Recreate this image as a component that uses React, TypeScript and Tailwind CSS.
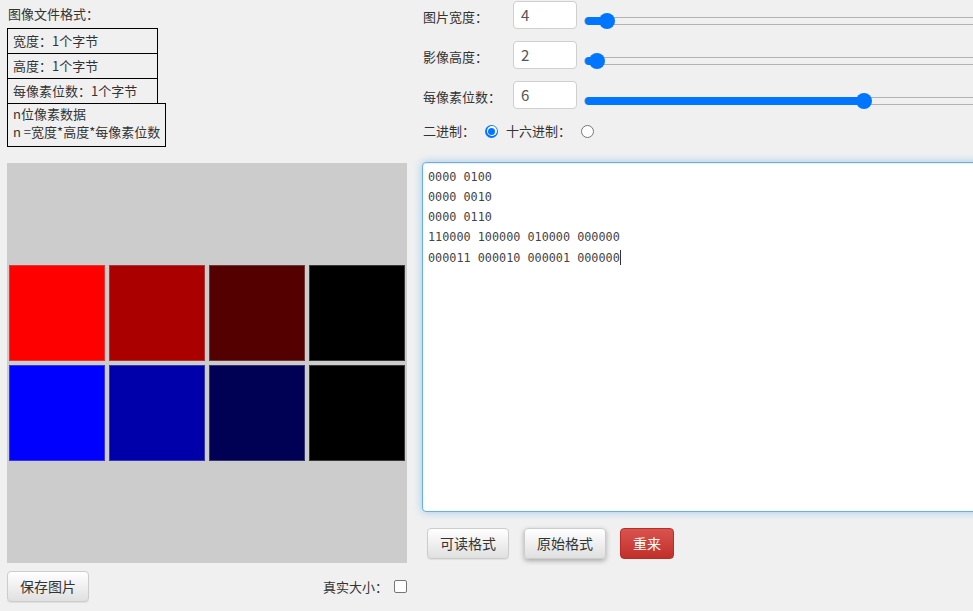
import React from "react";

const FONT = { fontFamily: '"Noto Sans CJK SC", "Noto Sans", sans-serif' };
const MONO = { fontFamily: '"DejaVu Sans Mono", "Liberation Mono", monospace' };

function Slider({ pos }: { pos: number }) {
  return (
    <div className="relative ml-[7px] mt-[13px] h-[16px] w-[520px] shrink-0">
      <div className="absolute left-0 right-0 top-[4px] h-[8px] rounded-full border border-[#b2b2b2]" />
      <div
        className="absolute left-[1px] top-[4px] h-[8px] rounded-l-full bg-[#0075ff]"
        style={{ width: pos }}
      />
      <div
        className="absolute top-0 h-[16px] w-[16px] rounded-full bg-[#0075ff]"
        style={{ left: pos - 8 }}
      />
    </div>
  );
}

function Row({ label, value, pos }: { label: string; value: string; pos: number }) {
  return (
    <div className="flex h-[40px] items-start">
      <div className="mt-[7px] w-[91px] pl-[1px] text-[13px] leading-[20px] text-[#333]">{label}</div>
      <div className="mt-[1px] flex h-[28px] w-[64px] shrink-0 items-center rounded-[4px] border border-[#cfcfcf] bg-white px-[7px] text-[15px] text-[#555]">
        {value}
      </div>
      <Slider pos={pos} />
    </div>
  );
}

const btnDefault =
  "h-[31px] rounded-[4px] border border-[#cccccc] bg-gradient-to-b from-white to-[#e0e0e0] px-3 text-[14px] text-[#333] shadow-[0_1px_1px_rgba(0,0,0,0.075)]";

export default function App() {
  const colors = [
    ["#ff0000", "#aa0000", "#550000", "#000000"],
    ["#0000ff", "#0000aa", "#000055", "#000000"],
  ];
  return (
    <div className="flex h-[611px] w-[973px] overflow-hidden bg-[#f0f0f0] text-[#333]" style={FONT}>
      {/* Left column */}
      <div className="ml-[7px] flex w-[400px] shrink-0 flex-col">
        <div className="mt-[4px] mb-[4px] pl-[1px] text-[13px] leading-[20px]">图像文件格式：</div>
        <div className="flex flex-col items-start text-[13px]">
          <div className="h-[26px] w-[151px] border border-black pl-[5px] leading-[24px]">宽度：1个字节</div>
          <div className="-mt-px h-[26px] w-[151px] border border-black pl-[5px] leading-[24px]">高度：1个字节</div>
          <div className="-mt-px h-[26px] w-[151px] border border-black pl-[5px] leading-[24px]">每像素位数：1个字节</div>
          <div className="-mt-px h-[44px] w-[159px] border border-black pl-[5px] pt-[1px] leading-[18px]">
            <div>n位像素数据</div>
            <div>n =宽度*高度*每像素位数</div>
          </div>
        </div>
        <div className="mt-[16px] flex h-[400px] w-[400px] flex-col justify-center bg-[#cccccc]">
          {colors.map((row, i) => (
            <div key={i} className="flex">
              {row.map((c, j) => (
                <div key={j} className="h-[100px] w-[100px] p-[2px]">
                  <div className="h-full w-full border border-[rgba(160,160,160,0.35)]" style={{ background: c }} />
                </div>
              ))}
            </div>
          ))}
        </div>
        <div className="mt-[8px] flex items-center justify-between">
          <button className="h-[31px] w-[82px] rounded-[4px] border border-[#cccccc] bg-gradient-to-b from-white to-[#e0e0e0] text-[14px] text-[#333] shadow-[0_1px_1px_rgba(0,0,0,0.075)]">
            保存图片
          </button>
          <div className="flex items-center text-[13px]">
            <span>真实大小：</span>
            <span className="ml-[6px] h-[13px] w-[13px] rounded-[2px] border border-[#767676] bg-white" />
          </div>
        </div>
      </div>

      {/* Right column */}
      <div className="ml-[15px] flex flex-col">
        <Row label="图片宽度：" value="4" pos={23} />
        <Row label="影像高度：" value="2" pos={13} />
        <Row label="每像素位数：" value="6" pos={280} />
        <div className="flex h-[22px] items-center text-[13px] leading-[20px]">
          <span className="w-[63px] pl-[1px]">二进制：</span>
          <span className="flex h-[13px] w-[13px] items-center justify-center rounded-full bg-[#0075ff]">
            <span className="flex h-[10px] w-[10px] items-center justify-center rounded-full bg-white">
              <span className="h-[7px] w-[7px] rounded-full bg-[#0075ff]" />
            </span>
          </span>
          <span className="ml-[8px] w-[75px]">十六进制：</span>
          <span className="h-[13px] w-[13px] rounded-full border border-[#767676] bg-white" />
        </div>
        <div
          className="mt-[20px] h-[350px] w-[570px] whitespace-pre rounded-[4px] border border-[#66afe9] bg-white px-[5px] pt-[4px] text-[11.8px] leading-[20px] text-[#444] shadow-[inset_0_1px_1px_rgba(0,0,0,0.075),0_0_8px_rgba(102,175,233,0.6)]"
          style={MONO}
        >
          {"0000 0100\n0000 0010\n0000 0110\n110000 100000 010000 000000\n000011 000010 000001 000000"}
          <span className="inline-block h-[15px] w-px translate-y-[3px] bg-[#333]" />
        </div>
        <div className="mt-[16px] ml-[5px] flex items-center">
          <button className={btnDefault + " w-[82px]"}>可读格式</button>
          <button className="ml-[15px] h-[31px] w-[82px] rounded-[4px] border border-[#cccccc] bg-gradient-to-b from-white to-[#e0e0e0] text-[14px] text-[#333] shadow-[0_2px_5px_rgba(0,0,0,0.3)]">
            原始格式
          </button>
          <button className="ml-[14px] h-[31px] w-[54px] rounded-[4px] border border-[#b92c28] bg-gradient-to-b from-[#d9534f] to-[#c12e2a] text-[14px] text-white">
            重来
          </button>
        </div>
      </div>
    </div>
  );
}
